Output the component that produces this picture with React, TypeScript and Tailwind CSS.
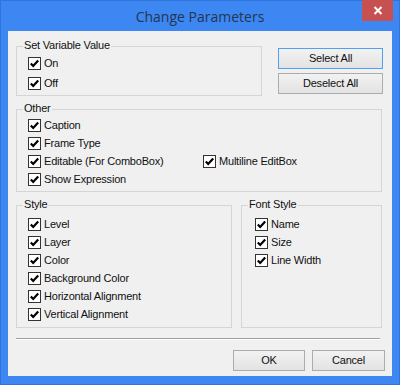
import { ReactNode } from 'react';

const font = { fontFamily: '"Liberation Sans", Arial, sans-serif' };

function Check({ label }: { label: string }) {
  return (
    <div className="flex items-center h-[18px]">
      <span className="w-[13px] h-[13px] border border-[#333333] bg-white flex items-center justify-center shrink-0">
        <svg width="11" height="11" viewBox="0 0 11 11">
          <path d="M1.8 5.4 L4.2 7.9 L9.2 2.4" fill="none" stroke="#000" strokeWidth="2.2" />
        </svg>
      </span>
      <span className="ml-[3px] text-[11px] tracking-[-0.2px] text-[#111]">{label}</span>
    </div>
  );
}

function Group({ title, className, children }: { title: string; className: string; children: ReactNode }) {
  return (
    <div className={`relative border border-[#d5d5d5] ${className}`}>
      <span className="absolute left-[6px] top-[-9px] px-[1px] bg-[#f0f0f0] text-[11px] leading-[14px] tracking-[-0.2px] text-[#111]">
        {title}
      </span>
      {children}
    </div>
  );
}

function Btn({ label, focus, className }: { label: string; focus?: boolean; className: string }) {
  return (
    <button
      className={`h-[21px] text-[11px] tracking-[-0.2px] text-[#111] border bg-gradient-to-b from-[#f2f2f2] to-[#e3e3e3] ${
        focus ? 'border-[#4ea1f3]' : 'border-[#acacac]'
      } ${className}`}
    >
      {label}
    </button>
  );
}

export default function App() {
  return (
    <div className="w-[400px] h-[385px] bg-[#3d87f2] border border-[#3273dc] flex flex-col" style={font}>
      {/* title bar */}
      <div className="relative h-[30px] flex items-center justify-center">
        <span className="text-[14px] text-[#243650] pt-[1px]" style={{ fontFamily: '"Open Sans", "Noto Sans", sans-serif' }}>
          Change Parameters
        </span>
        <div className="absolute top-[-1px] right-[6px] w-[31px] h-[21px] bg-[#c75050] flex items-center justify-center">
          <svg width="10" height="9" viewBox="0 0 10 9">
            <path d="M1.5 1 L8.5 8 M8.5 1 L1.5 8" stroke="#fff" strokeWidth="2" />
          </svg>
        </div>
      </div>

      {/* client area */}
      <div className="mx-[7px] w-[384px] h-[345px] bg-[#f0f0f0] flex flex-col">
        <div className="flex items-start">
          <Group title="Set Variable Value" className="ml-[8px] mt-[15px] w-[246px] h-[50px] pl-[11px] pt-[6px]">
            <div className="flex flex-col">
              <div className="h-[20px] flex items-center"><Check label="On" /></div>
              <div className="h-[20px] flex items-center"><Check label="Off" /></div>
            </div>
          </Group>
          <div className="ml-[16px] mt-[17px] flex flex-col gap-[4px]">
            <Btn label="Select All" focus className="w-[105px]" />
            <Btn label="Deselect All" className="w-[105px]" />
          </div>
        </div>

        <Group title="Other" className="ml-[8px] mt-[13px] w-[366px] h-[83px] pl-[11px] pt-[6px]">
          <div className="grid grid-cols-[175px_1fr]">
            <Check label="Caption" />
            <div />
            <Check label="Frame Type" />
            <div />
            <Check label="Editable (For ComboBox)" />
            <Check label="Multiline EditBox" />
            <Check label="Show Expression" />
            <div />
          </div>
        </Group>

        <div className="flex mt-[13px]">
          <Group title="Style" className="ml-[8px] w-[216px] h-[123px] pl-[11px] pt-[9px]">
            <Check label="Level" />
            <Check label="Layer" />
            <Check label="Color" />
            <Check label="Background Color" />
            <Check label="Horizontal Alignment" />
            <Check label="Vertical Alignment" />
          </Group>
          <Group title="Font Style" className="ml-[9px] w-[141px] h-[123px] pl-[13px] pt-[9px]">
            <Check label="Name" />
            <Check label="Size" />
            <Check label="Line Width" />
          </Group>
        </div>

        <div className="ml-[8px] mt-[10px] w-[364px] border-t border-[#a0a0a0] border-b border-b-white" />

        <div className="flex mt-[10px] pl-[225px]">
          <Btn label="OK" className="w-[72px]" />
          <Btn label="Cancel" className="ml-[7px] w-[73px]" />
        </div>
      </div>
    </div>
  );
}
